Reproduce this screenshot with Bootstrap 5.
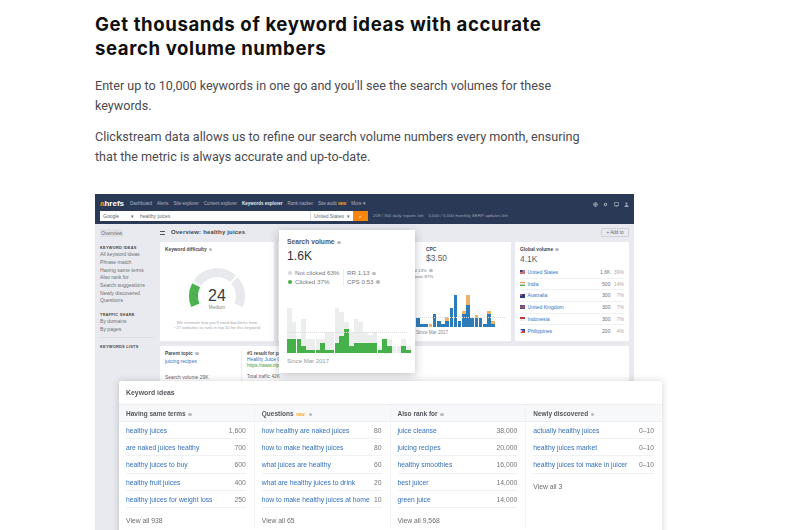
<!DOCTYPE html>
<html lang="en">
<head>
  <meta charset="UTF-8" />
  <meta name="viewport" content="width=device-width, initial-scale=1.0"/>
  <title>Keyword ideas</title>
  <link href="https://cdn.jsdelivr.net/npm/bootstrap@5.3.3/dist/css/bootstrap.min.css" rel="stylesheet" />
  <style>
    html, body { height: 530px; overflow: hidden; background: #fff; }
    .article { padding: 13px 0 0 95px; }
    .article h2 { font: 700 18.6px/23.5px Inter, sans-serif; letter-spacing: .6px; color: #101010; margin: 0 0 16px; width: 480px; }
    .article p { font: 400 12.6px/20px Roboto, sans-serif; color: #4b4b4f; margin: 0 0 11px; width: 490px; }

    .shot { position: relative; width: 539px; height: 336px; margin-top: 27px; font-family: "Liberation Sans", sans-serif; filter: blur(.35px); }
    .app { height: 336px; overflow: hidden; background: #e9eaef; color: #555; }
    .topbar { height: 30px; background: #2a3a56; padding: 3px 5px 0; color: #aab3c4; font-size: 4.5px; }
    .topnav { height: 14px; gap: 5px; }
    .brand { font: 700 8px/1 "Liberation Sans", sans-serif; color: #fff; margin-right: 1px; width: 24px; }
    .brand b { color: #f5890f; }
    .topnav .on { color: #e6e9ef; font-weight: 700; }
    .sup { color: #f5a623; font-size: 3.5px; font-weight: 700; }
    .top-icons { gap: 5.5px; }
    .searchrow { height: 10px; }
    .sfield { background: #fff; color: #666; height: 10px; line-height: 10px; padding: 0 3px; font-size: 5px; }
    .sfield.g { width: 37px; }
    .sfield.q { width: 173px; }
    .sfield.c { width: 43px; border-left: 1px solid #ddd; }
    .sgo { width: 15px; height: 10px; background: #f5860b; color: #fff; font-size: 5px; line-height: 10px; text-align: center; }
    .quota { margin-left: 5px; color: #98a2b5; font-size: 4.4px; white-space: nowrap; }

    .sidebar { width: 65px; padding: 5px 0 0 5px; font-size: 5.1px; color: #6d6f75; flex: none; }
    .ov-tag { display: inline-block; background: #dfe0e5; padding: 0 1px; line-height: 8px; }
    .sidehead { font-weight: 700; font-size: 3.9px; letter-spacing: .25px; color: #44464b; line-height: 7.6px; margin-top: 6px; }
    .sidelink { line-height: 7.65px; white-space: nowrap; }
    .sidesep { border-top: 1px solid #dfe0e5; margin: 3px 5px 0 0; }
    .sidesep + .sidehead { margin-top: 5px; }

    .mainpane { width: 469px; padding-top: 3px; flex: none; }
    .titlebar { height: 11px; margin-bottom: 4px; }
    .burger { width: 5px; height: 4px; border-top: 1px solid #555; border-bottom: 1px solid #555; margin-right: 6px; }
    .pagetitle { font-weight: 700; font-size: 6px; letter-spacing: .18px; color: #44464b; }
    .addto { width: 28px; height: 9px; border: 1px solid #cfd1d7; border-radius: 1px; font-size: 4.6px; line-height: 7px; text-align: center; color: #666; }
    .tile { background: #fff; }
    .toprow { gap: 4px; height: 99px; margin-bottom: 5px; }
    .tile-kd { width: 114px; padding: 5px; }
    .tile-sv { width: 233px; position: relative; }
    .tile-gv { width: 114px; padding: 5px; }
    .tile-low { height: 60px; padding: 5px; font-size: 5px; color: #666; }
    .tiletitle { font-weight: 700; font-size: 4.8px; color: #44464b; line-height: 6px; white-space: nowrap; }
    .qm { display: inline-block; width: 3.5px; height: 3.5px; border-radius: 50%; background: #bbb; margin-left: 1px; vertical-align: baseline; }
    .gauge { display: block; margin: 13px auto 0; }
    .kdnote { font-size: 4.2px; line-height: 5.2px; color: #a4a6ab; text-align: center; margin-top: 6px; white-space: nowrap; }

    .cpcbox { margin-left: 148px; padding: 5px 0 4px; }
    .bigval { font-size: 8.4px; line-height: 11px; color: #5a5c61; }
    .sharetxt { margin-left: 130px; width: 24px; font-size: 4.4px; line-height: 6px; color: #777; text-align: right; white-space: nowrap; }
    .barsblue { position: relative; height: 32px; gap: .6px; margin: 15px 0 0 138px; }
    .bluecol { width: 3.6px; display: flex; flex-direction: column; }
    .bluecol i { display: block; }
    .gridln { position: absolute; left: 0; right: 0; border-top: 1px dotted #dcdde0; }
    .barsblue .gridln { top: 22px; right: 6px; }
    .since { font-size: 4.6px; color: #888; margin-left: 138px; margin-top: 3px; white-space: nowrap; }

    .geo { border-bottom: 1px solid #f0f1f3; height: 11.7px; line-height: 11px; font-size: 5.1px; gap: 2.5px; }
    .geo:last-child { border-bottom: 0; }
    .geo a, .parent a, .kwrow a { color: #3470bd; text-decoration: none; }
    .geo svg { flex: none; }
    .gval { color: #6f7177; }
    .gpct { color: #aaa; width: 11px; text-align: right; }
    .gvbig { font-size: 8.4px; line-height: 11px; margin: 1px 0 2px; color: #5a5c61; }

    .parent { width: 77px; border-right: 1px solid #eee; height: 40px; }
    .parent-b { padding-left: 5px; white-space: nowrap; width: 36px; border-right: 0; }
    .lowline { line-height: 6px; font-size: 4.8px; white-space: nowrap; }
    .lowline.traffic { margin-top: 5px; }
    .greenurl { color: #3c9a3c; }
    .lowgap { line-height: 8px; }

    .pop-sv { position: absolute; left: 184px; top: 36px; width: 136px; height: 143px; background: #fff; box-shadow: 0 2px 9px rgba(40,45,60,.3); padding: 8px 8px 0; }
    .pop-title { font-weight: 700; font-size: 6.7px; color: #55575c; line-height: 8px; }
    .pop-val { font-size: 12.2px; line-height: 14px; color: #333; margin: 3px 0 6px; }
    .pop-legend { font-size: 6.2px; line-height: 8.6px; color: #777; }
    .legend-l { width: 57px; border-right: 1px solid #eee; white-space: nowrap; }
    .legend-r { padding-left: 3px; white-space: nowrap; }
    .dot { display: inline-block; width: 4px; height: 4px; border-radius: 50%; margin: 0 3px 0 1px; }
    .popbars { position: relative; height: 46px; margin-top: 21px; }
    .popbars .gridln { top: 25px; z-index: 1; }
    .popcol { width: 4.77px; padding-right: .2px; display: flex; flex-direction: column; flex: none; }
    .popcol i { display: block; }
    .pop-since { font-size: 6px; color: #999; margin-top: 4px; }

    .kw-card { position: absolute; left: 24px; top: 187px; width: 543px; height: 170px; background: #fff; box-shadow: 0 0 7px rgba(40,45,60,.22); border-radius: 2px; font-size: 6.8px; color: #6a6c70; }
    .kw-head { height: 23px; line-height: 24px; padding-left: 7px; font-weight: 700; color: #55575c; font-size: 6.9px; }
    .kw-col { width: 25%; border-right: 1px dotted #e4e6ea; }
    .kw-col:last-child { border-right: 0; }
    .kw-sub { height: 18px; line-height: 18px; padding-left: 7px; background: #f7f8fa; border-top: 1px dotted #e6e7eb; border-bottom: 1px solid #eeeff2; font-weight: 700; color: #55575c; font-size: 6.5px; white-space: nowrap; }
    .tag-new { color: #f5a623; font-size: 3.6px; font-weight: 700; margin: 0 1px; }
    .kw-list { padding: 0 8px 0 7px; }
    .kwrow { height: 17.2px; line-height: 17px; border-bottom: 1px solid #f0f1f3; white-space: nowrap; }
    .kw-more { line-height: 12px; margin-top: 7px; padding-left: 7px; }
    .kwrow span { color: #777; }
  </style>
</head>
<body>
  <div class="article">
    <h2>Get thousands of keyword ideas with accurate search volume numbers</h2>
    <p>Enter up to 10,000 keywords in one go and you'll see the search volumes for these keywords.</p>
    <p>Clickstream data allows us to refine our search volume numbers every month, ensuring that the metric is always accurate and up-to-date.</p>

    <div class="shot">
      <div class="app">
        <div class="topbar">
          <div class="d-flex align-items-center topnav">
            <span class="brand"><b>a</b>hrefs</span>
            <span>Dashboard</span><span>Alerts</span><span>Site explorer</span><span>Content explorer</span>
            <span class="on">Keywords explorer</span><span>Rank tracker</span><span>Site audit <span class="sup">NEW</span></span><span>More ▾</span>
            <span class="ms-auto d-flex top-icons">
              <svg width="5" height="5" viewBox="0 0 10 10" fill="none" stroke="#9aa4b6" stroke-width="1.5"><circle cx="5" cy="5" r="4"/><path d="M1 5h8M5 1v8"/></svg>
              <svg width="5" height="5" viewBox="0 0 10 10"><circle cx="5" cy="5" r="3.4" fill="#9aa4b6"/><circle cx="5" cy="5" r="1.3" fill="#2a3a56"/></svg>
              <svg width="5" height="5" viewBox="0 0 10 10" fill="none" stroke="#9aa4b6" stroke-width="1.5"><path d="M1 1h8v6H1zM3 9h4"/></svg>
              <svg width="5" height="5" viewBox="0 0 10 10" fill="#9aa4b6"><circle cx="5" cy="3" r="2.2"/><path d="M1 10c0-3 2-4 4-4s4 1 4 4z"/></svg>
            </span>
          </div>
          <div class="d-flex align-items-center searchrow">
            <div class="sfield g d-flex justify-content-between"><span>Google</span><span>▾</span></div>
            <div class="sfield q">healthy juices</div>
            <div class="sfield c d-flex justify-content-between"><span>United States</span><span>▾</span></div>
            <div class="sgo">⌕</div>
            <div class="quota">209 / 300 daily reports left &nbsp;&nbsp; 5,000 / 5,000 monthly SERP updates left</div>
          </div>
        </div>
        <div class="d-flex">
          <div class="sidebar">
            <span class="ov-tag">Overview</span>
            <div class="sidehead">KEYWORD IDEAS</div>
            <div class="sidelink">All keyword ideas</div>
            <div class="sidelink">Phrase match</div>
            <div class="sidelink">Having same terms</div>
            <div class="sidelink">Also rank for</div>
            <div class="sidelink">Search suggestions</div>
            <div class="sidelink">Newly discovered</div>
            <div class="sidelink">Questions</div>
            <div class="sidehead">TRAFFIC SHARE</div>
            <div class="sidelink">By domains</div>
            <div class="sidelink">By pages</div>
            <div class="sidesep"></div>
            <div class="sidehead">KEYWORDS LISTS</div>
          </div>
          <div class="mainpane">
            <div class="d-flex align-items-center titlebar">
              <span class="burger"></span>
              <span class="pagetitle">Overview: healthy juices</span>
              <span class="addto ms-auto">+ Add to</span>
            </div>
            <div class="d-flex toprow">
              <div class="tile tile-kd">
                <div class="tiletitle">Keyword difficulty <i class="qm"></i></div>
                <svg class="gauge" width="60" height="48" viewBox="0 0 60 48">
                  <g fill="none" stroke-width="9">
                    <path d="M10.3 17.2 A23.5 23.5 0 0 1 46 12.8" stroke="#e8e9ed"/>
                    <path d="M47.5 14.3 A23.5 23.5 0 0 1 51.6 39.2" stroke="#e8e9ed"/>
                    <path d="M9.1 19.3 A23.5 23.5 0 0 0 8.4 39.2" stroke="#4cb64c"/>
                  </g>
                  <g fill="#5a5fa8">
                    <circle cx="8" cy="22" r=".55"/><circle cx="10" cy="25" r=".55"/><circle cx="6" cy="28" r=".55"/><circle cx="9" cy="30" r=".55"/>
                    <circle cx="6" cy="33" r=".55"/><circle cx="8" cy="35" r=".55"/><circle cx="10" cy="37" r=".55"/><circle cx="11" cy="20" r=".55"/>
                  </g>
                  <text x="30" y="34.7" text-anchor="middle" font-family="Liberation Sans, sans-serif" font-size="16" fill="#3c3c40">24</text>
                  <text x="30" y="42.5" text-anchor="middle" font-family="Liberation Sans, sans-serif" font-size="4.6" fill="#888">Medium</text>
                </svg>
                <div class="kdnote">We estimate that you'll need backlinks from<br>~27 websites to rank in top 10 for this keyword</div>
              </div>
              <div class="tile tile-sv">
                <div class="cpcbox">
                  <div class="tiletitle">CPC</div>
                  <div class="bigval">$3.50</div>
                </div>
                <div class="sharetxt">Paid 13% <i class="qm"></i></div>
                <div class="sharetxt">Organic 87%</div>
                <div class="d-flex align-items-end barsblue" id="blueBars"><div class="gridln"></div></div>
                <div class="since">Since Mar 2017</div>
              </div>
              <div class="tile tile-gv">
                <div class="tiletitle">Global volume <i class="qm"></i></div>
                <div class="gvbig">4.1K</div>
                <div class="geo d-flex align-items-center"><svg width="5" height="4"><rect width="5" height="4" fill="#c9747c"/><rect width="2.5" height="2" fill="#34407c"/></svg><a href="#">United States</a><span class="gval ms-auto">1.6K</span><span class="gpct">39%</span></div>
                <div class="geo d-flex align-items-center"><svg width="5" height="4"><rect width="5" height="1.4" fill="#f0a050"/><rect y="1.4" width="5" height="1.3" fill="#eee"/><rect y="2.7" width="5" height="1.3" fill="#5aa55a"/></svg><a href="#">India</a><span class="gval ms-auto">500</span><span class="gpct">14%</span></div>
                <div class="geo d-flex align-items-center"><svg width="5" height="4"><rect width="5" height="4" fill="#2c3a80"/><rect width="2.2" height="1.6" fill="#c06070"/></svg><a href="#">Australia</a><span class="gval ms-auto">300</span><span class="gpct">7%</span></div>
                <div class="geo d-flex align-items-center"><svg width="5" height="4"><rect width="5" height="4" fill="#56508c"/><rect y="1.5" width="5" height="1" fill="#c55"/></svg><a href="#">United Kingdom</a><span class="gval ms-auto">300</span><span class="gpct">7%</span></div>
                <div class="geo d-flex align-items-center"><svg width="5" height="4"><rect width="5" height="2" fill="#b83a3a"/><rect y="2" width="5" height="2" fill="#eee"/></svg><a href="#">Indonesia</a><span class="gval ms-auto">300</span><span class="gpct">7%</span></div>
                <div class="geo d-flex align-items-center"><svg width="5" height="4"><rect width="5" height="2" fill="#3a4c9c"/><rect y="2" width="5" height="2" fill="#c84444"/><polygon points="0,0 2.5,2 0,4" fill="#eee"/></svg><a href="#">Philippines</a><span class="gval ms-auto">200</span><span class="gpct">4%</span></div>
              </div>
            </div>
            <div class="tile tile-low d-flex">
              <div class="parent">
                <div class="tiletitle">Parent topic <i class="qm"></i></div>
                <div class="lowgap"><a href="#">juicing recipes</a></div>
                <div class="lowgap">&nbsp;</div>
                <div class="lowgap">Search volume 29K</div>
              </div>
              <div class="parent parent-b">
                <div class="tiletitle">#1 result for pa</div>
                <div class="lowline"><a href="#">Healthy Juice Cl</a></div>
                <div class="lowline greenurl">https://www.nip</div>
                <div class="lowline traffic">Total traffic 42K</div>
              </div>
            </div>
          </div>
        </div>
      </div>

      <div class="pop-sv">
        <div class="pop-title">Search volume <i class="qm"></i></div>
        <div class="pop-val">1.6K</div>
        <div class="d-flex pop-legend">
          <div class="legend-l">
            <div><i class="dot" style="background:#d8d9dc"></i>Not clicked 63%</div>
            <div><i class="dot" style="background:#46b04a"></i>Clicked 37%</div>
          </div>
          <div class="legend-r">
            <div>RR 1.13 <i class="qm"></i></div>
            <div>CPS 0.53 <i class="qm"></i></div>
          </div>
        </div>
        <div class="popbars d-flex align-items-end" id="popBars"><div class="gridln"></div></div>
        <div class="pop-since">Since Mar 2017</div>
      </div>

      <div class="kw-card">
        <div class="kw-head">Keyword ideas</div>
        <div class="d-flex">
          <div class="kw-col">
            <div class="kw-sub">Having same terms <i class="qm"></i></div>
            <div class="kw-list">
              <div class="kwrow d-flex justify-content-between"><a href="#">healthy juices</a><span>1,600</span></div>
              <div class="kwrow d-flex justify-content-between"><a href="#">are naked juices healthy</a><span>700</span></div>
              <div class="kwrow d-flex justify-content-between"><a href="#">healthy juices to buy</a><span>600</span></div>
              <div class="kwrow d-flex justify-content-between"><a href="#">healthy fruit juices</a><span>400</span></div>
              <div class="kwrow d-flex justify-content-between"><a href="#">healthy juices for weight loss</a><span>250</span></div>
            </div>
            <div class="kw-more">View all 938</div>
          </div>
          <div class="kw-col">
            <div class="kw-sub">Questions <span class="tag-new">NEW</span> <i class="qm"></i></div>
            <div class="kw-list">
              <div class="kwrow d-flex justify-content-between"><a href="#">how healthy are naked juices</a><span>80</span></div>
              <div class="kwrow d-flex justify-content-between"><a href="#">how to make healthy juices</a><span>80</span></div>
              <div class="kwrow d-flex justify-content-between"><a href="#">what juices are healthy</a><span>60</span></div>
              <div class="kwrow d-flex justify-content-between"><a href="#">what are healthy juices to drink</a><span>20</span></div>
              <div class="kwrow d-flex justify-content-between"><a href="#">how to make healthy juices at home</a><span>10</span></div>
            </div>
            <div class="kw-more">View all 65</div>
          </div>
          <div class="kw-col">
            <div class="kw-sub">Also rank for <i class="qm"></i></div>
            <div class="kw-list">
              <div class="kwrow d-flex justify-content-between"><a href="#">juice cleanse</a><span>38,000</span></div>
              <div class="kwrow d-flex justify-content-between"><a href="#">juicing recipes</a><span>20,000</span></div>
              <div class="kwrow d-flex justify-content-between"><a href="#">healthy smoothies</a><span>16,000</span></div>
              <div class="kwrow d-flex justify-content-between"><a href="#">best juicer</a><span>14,000</span></div>
              <div class="kwrow d-flex justify-content-between"><a href="#">green juice</a><span>14,000</span></div>
            </div>
            <div class="kw-more">View all 9,568</div>
          </div>
          <div class="kw-col">
            <div class="kw-sub">Newly discovered <i class="qm"></i></div>
            <div class="kw-list">
              <div class="kwrow d-flex justify-content-between"><a href="#">actually healthy juices</a><span>0–10</span></div>
              <div class="kwrow d-flex justify-content-between"><a href="#">healthy juices market</a><span>0–10</span></div>
              <div class="kwrow d-flex justify-content-between"><a href="#">healthy juices toi make in juicer</a><span>0–10</span></div>
            </div>
            <div class="kw-more">View all 3</div>
          </div>
        </div>
      </div>
    </div>
  </div>

  <script src="https://cdn.jsdelivr.net/npm/bootstrap@5.3.3/dist/js/bootstrap.bundle.min.js"></script>
  <script>
    // [total height, green height] of each month
    const popData = [[45,14],[31,14],[14,14],[34,7],[14,3.5],[14,3.5],[14,3.5],[14,10],[21,3.5],[21,3.5],[45,10],[41,17],[31,24],[21,7],[34,10],[31,10],[21,10],[18,10],[21,10],[7,3.5],[14,14],[14,7],[7,0],[7,0],[14,7],[7,3.5]];
    // [blue height, orange height]
    const blueData = [[9,0],[3,0],[3,0],[0,3],[13,0],[6,0],[3,0],[6,4],[19,0],[32,0],[6,0],[13,3],[22,10],[9,0],[9,3],[9,0],[3,0],[13,3],[3,3]];

    const popBars = document.getElementById('popBars');
    popData.forEach(([total, green]) => {
      const col = document.createElement('div');
      col.className = 'popcol';
      col.innerHTML = `<i style="height:${total - green}px;background:#eceded"></i><i style="height:${green}px;background:#46b04a"></i>`;
      popBars.appendChild(col);
    });

    const blueBars = document.getElementById('blueBars');
    blueData.forEach(([blue, orange]) => {
      const col = document.createElement('div');
      col.className = 'bluecol';
      col.innerHTML = `<i style="height:${orange}px;background:#eeb26a"></i><i style="height:${blue}px;background:#2b7cb8"></i>`;
      blueBars.appendChild(col);
    });
  </script>
</body>
</html>
